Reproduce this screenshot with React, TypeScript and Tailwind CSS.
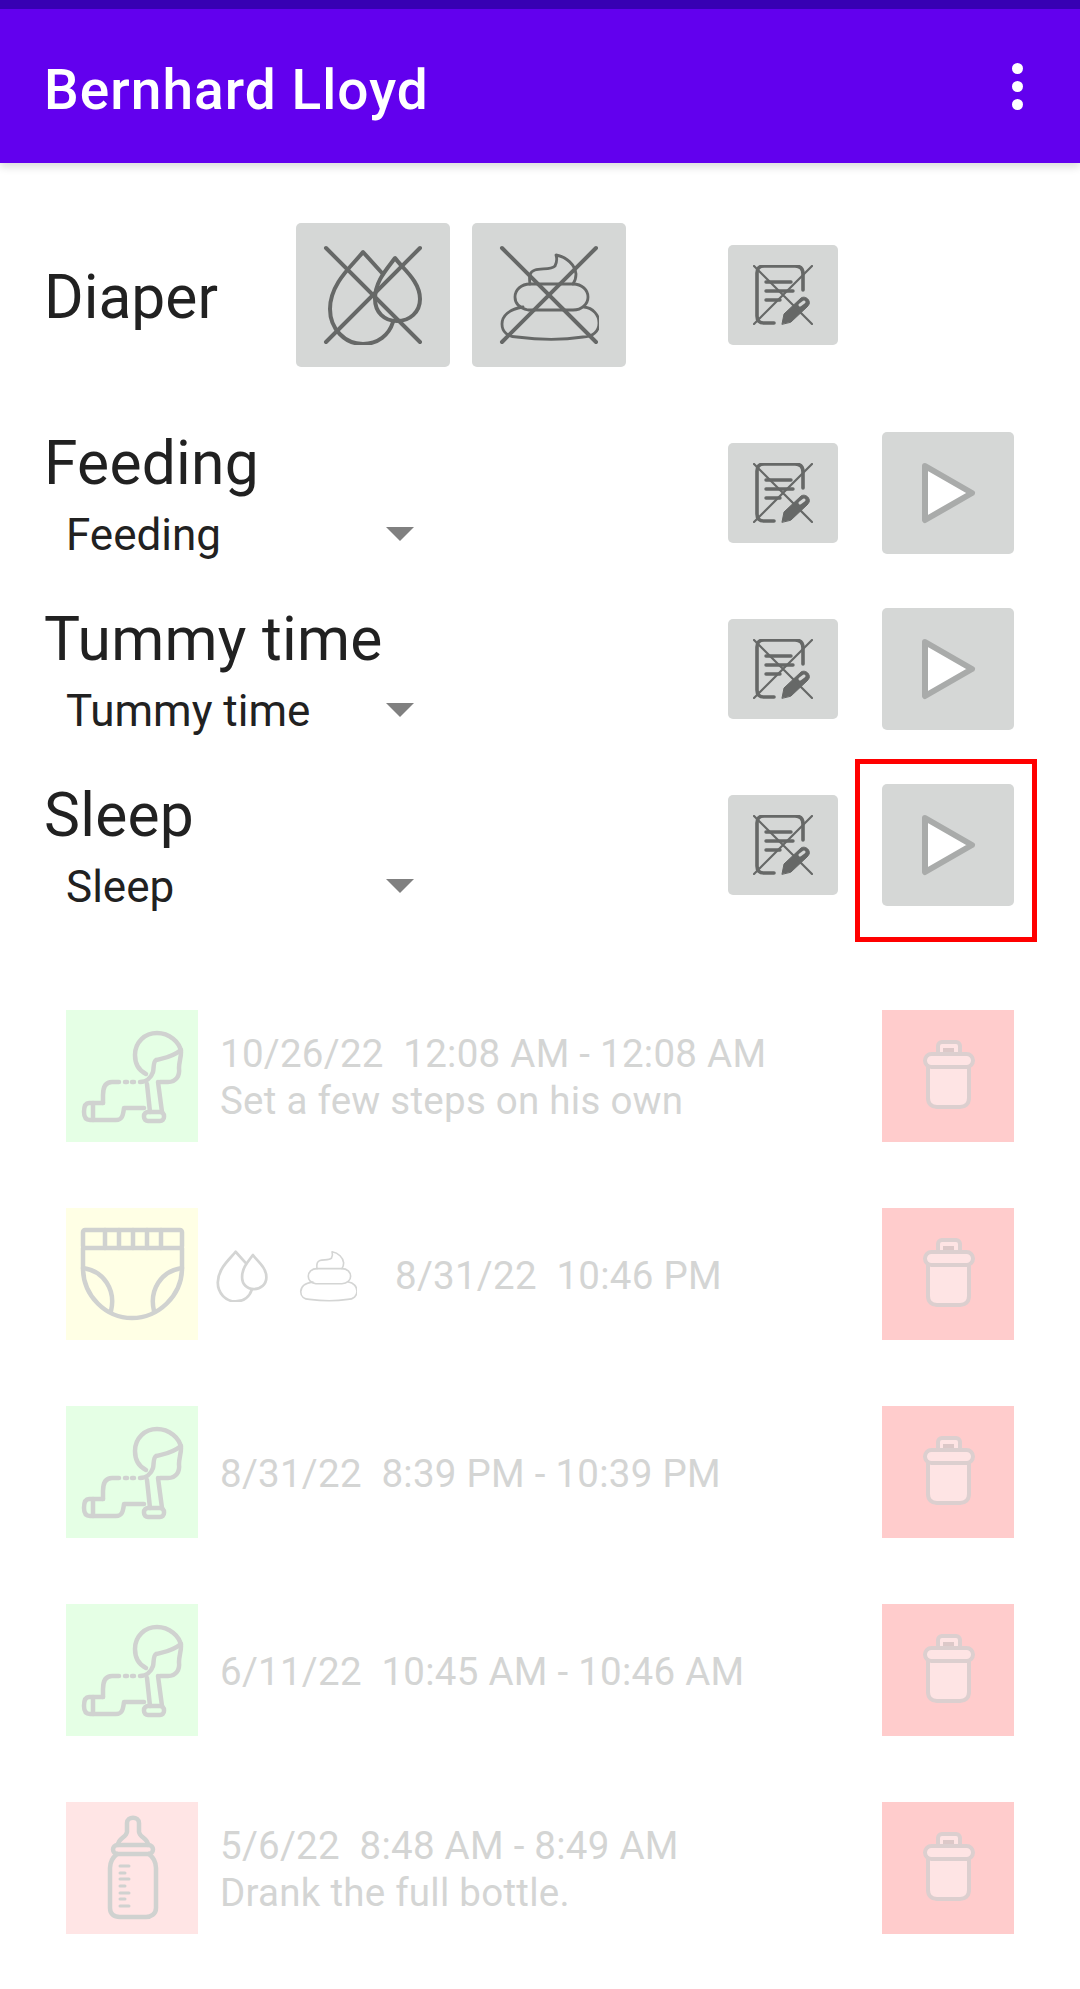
const strokeDark = '#666867';

function Drops({ cross = false, className = '', color = strokeDark, sw = 4 }: { cross?: boolean; className?: string; color?: string; sw?: number }) {
  return (
    <svg viewBox="0 0 100 100" className={className} fill="none" stroke={color} strokeWidth={sw} strokeLinecap="round" strokeLinejoin="round">
      <path d="M59 28 L40 7 C30 20 7 38 7 64 C7 84 22 99 40 99 C55 99 66 90 70 77" />
      <path d="M72 13 C64 24 52 36 52 54 C52 67 61 76 74 76 C87 76 97 67 97 54 C97 36 80 24 72 13 Z" />
      {cross && <path d="M3 3 L97 97 M97 3 L3 97" />}
    </svg>
  );
}

function Poop({ cross = false, className = '', color = strokeDark, sw = 2.8 }: { cross?: boolean; className?: string; color?: string; sw?: number }) {
  return (
    <svg viewBox="0 0 100 100" className={className} fill="none" stroke={color} strokeWidth={sw} strokeLinecap="round" strokeLinejoin="round">
      <path d="M24 62 C10 64 3 71 3 79 C3 87 9 92 18 92 C40 95 65 95 84 92 C94 92 100 86 100 78 C100 70 94 63 85 62" />
      <path d="M29 65 C20 63 16 58 16 52 C16 45 22 39 31 39 H74 C83 39 89 45 89 52 C89 59 83 65 74 65 Z" />
      <path d="M31 39 C30 32 30 27 36 25 C42 23 52 25 56 21 C58 17 58 13 57 10 C68 12 76 20 77 29 C77 33 76 36 74 39" />
      {cross && <path d="M3 3 L97 97 M97 3 L3 97" strokeWidth={4} />}
    </svg>
  );
}

function NotesIcon() {
  return (
    <svg viewBox="0 0 60 60" className="w-[60px] h-[60px]" fill="none" stroke={strokeDark} strokeLinecap="round" strokeLinejoin="round">
      <path d="M21 58 H11 Q4 58 4 51 V8 Q4 1 11 1 H42 Q50 1 50 9 V25" strokeWidth={3.6} />
      <path d="M13 17 H38 M13 26 H40 M13 35 H27" strokeWidth={3.4} />
      <path d="M29 59 L31 49 L48 33 C51 31 55 33 56 36 C57 38 56 40 54 42 L38 57 Z" fill={strokeDark} strokeWidth={1} />
      <path d="M47 40 L51 37" stroke="#d5d7d6" strokeWidth={3} />
      <path d="M1 1 L59 59 M59 1 L1 59" strokeWidth={2.2} />
    </svg>
  );
}

function PlayIcon() {
  return (
    <svg viewBox="0 0 56 62" className="w-[56px] h-[62px]">
      <path d="M5 4 L52 31 L5 58 Z" fill="#ffffff" stroke="#a9abaa" strokeWidth={6} strokeLinejoin="round" />
    </svg>
  );
}

function NotesButton() {
  return (
    <button className="w-[110px] h-[100px] rounded-[5px] bg-[#d5d7d6] flex items-center justify-center shrink-0">
      <NotesIcon />
    </button>
  );
}

function PlayButton() {
  return (
    <button className="w-[132px] h-[122px] rounded-[5px] bg-[#d5d7d6] flex items-center justify-center shrink-0">
      <PlayIcon />
    </button>
  );
}

function ActivityRow({ label, boxed = false }: { label: string; boxed?: boolean }) {
  return (
    <div className="h-[176px] flex items-center pl-[44px]">
      <div className="w-[684px] self-start pt-[23px]">
        <div className="text-[60.5px] leading-[71px] tracking-[0.25px] text-[#212121]">{label}</div>
        <div className="flex items-center justify-between w-[370px] h-[60px] pl-[22px] mt-[6px]">
          <span className="text-[44px] leading-[52px] text-[#212121]">{label}</span>
          <svg viewBox="0 0 28 14" className="w-[28px] h-[14px] -mt-[2px]">
            <polygon points="0,0 28,0 14,14" fill="#808080" />
          </svg>
        </div>
      </div>
      <NotesButton />
      <div className="relative ml-[44px]">
        <PlayButton />
        {boxed && (
          <div className="absolute -left-[27px] -top-[25px] w-[182px] h-[183px] border-[5px] border-[#ff0000]" />
        )}
      </div>
    </div>
  );
}

function CrawlIcon() {
  return (
    <svg viewBox="0 0 132 132" className="w-[132px] h-[132px]" fill="none" stroke="#d0d2d0" strokeWidth={4.5} strokeLinecap="round" strokeLinejoin="round">
      <path d="M80 64 C72 60 69 52 69 45 C69 32 79 23 91 23 C103 23 114 32 115 42 C115 48 113 52 113 58 C114 66 110 72 102 72 H94" />
      <path d="M115 40 C105 48 97 48 90 50 C87 52 88 58 87 62 C85 68 80 72 74 72" />
      <path d="M68 72 H66 M61 72 H59 M53 72 H46 C39 72 37 78 37 85 V93" />
      <path d="M81 74 L84 102 M92 72 L96 102" />
      <rect x="78" y="102" width="20" height="9" rx="4" />
      <path d="M37 93 H23 C19 93 18 97 18 102 C18 107 20 110 24 110 H50 C56 110 57 106 58 98 H78" />
      <path d="M27 93 V110" />
    </svg>
  );
}

function DiaperIcon() {
  return (
    <svg viewBox="0 0 132 132" className="w-[132px] h-[132px]" fill="none" stroke="#d0d2d0" strokeWidth={4.5} strokeLinecap="round" strokeLinejoin="round">
      <rect x="17" y="22" width="99" height="18" rx="2" />
      <path d="M39 22 V40 M53 22 V40 M67 22 V40 M81 22 V40 M95 22 V40" />
      <path d="M17 40 V60 C17 88 40 110 66 110 C92 110 116 88 116 60 V40" />
      <path d="M17 60 C38 63 50 82 45 103 M116 60 C95 63 83 82 88 103" />
    </svg>
  );
}

function BottleIcon() {
  return (
    <svg viewBox="0 0 132 132" className="w-[132px] h-[132px]" fill="none" stroke="#d0d2d0" strokeWidth={4.5} strokeLinecap="round" strokeLinejoin="round">
      <path d="M52 43 C52 36 60 36 61 30 V21 C61 14 73 14 73 21 V30 C74 36 82 36 82 43" />
      <rect x="47" y="43" width="40" height="9" rx="4.5" />
      <path d="M51 52 C46 56 44 60 44 66 V106 C44 112 48 115 54 115 H80 C85 115 90 112 90 106 V66 C90 60 88 56 83 52" />
      <path d="M54 64 H63 M54 71 H59 M54 77 H63 M54 84 H59 M54 91 H63 M54 97 H59 M54 104 H63" strokeWidth={3} />
    </svg>
  );
}

function TrashIcon() {
  return (
    <svg viewBox="0 0 132 132" className="w-[132px] h-[132px]" stroke="#dccfcf" strokeWidth={4} strokeLinejoin="round">
      <path d="M46 54 V88 C46 94 50 97 55 97 H78 C83 97 87 94 87 88 V54 Z" fill="#fee4e4" />
      <rect x="56" y="32" width="22" height="16" rx="4" fill="#fee4e4" />
      <rect x="61" y="38" width="11" height="5" fill="#dcc8c8" stroke="none" />
      <rect x="43" y="44" width="48" height="13" rx="6.5" fill="#fee4e4" />
    </svg>
  );
}

const textCls = 'text-[38.5px] leading-[47px] tracking-[0.26px] text-[#d4d5d4] whitespace-pre';

function LogRow({ icon, tint, lines, children }: { icon: React.ReactNode; tint: string; lines?: string[]; children?: React.ReactNode }) {
  return (
    <div className="h-[198px] flex items-start">
      <div className={`w-[132px] h-[132px] shrink-0 ${tint}`}>{icon}</div>
      <div className="flex-1 h-[132px] flex flex-col justify-center pl-[22px] pt-[2px]">
        {lines?.map((line) => (
          <div key={line} className={textCls}>{line}</div>
        ))}
        {children}
      </div>
      <div className="w-[132px] h-[132px] shrink-0 bg-[#ffcccc]">
        <TrashIcon />
      </div>
    </div>
  );
}

export default function App() {
  return (
    <div className="w-[1080px] h-[1989px] flex flex-col bg-white font-[Roboto,sans-serif] overflow-hidden">
      <div className="relative z-10 shadow-[0_4px_8px_rgba(0,0,0,0.14)]">
        <div className="h-[9px] bg-[#3700b3]" />
        <div className="h-[154px] bg-[#6200ee] flex items-center justify-between pl-[44px] pr-[57px]">
          <div className="text-[55px] leading-[64px] font-medium tracking-[1.05px] text-white mt-[7px]">Bernhard Lloyd</div>
          <div className="flex flex-col gap-[7px]">
            <div className="w-[11px] h-[11px] rounded-full bg-white" />
            <div className="w-[11px] h-[11px] rounded-full bg-white" />
            <div className="w-[11px] h-[11px] rounded-full bg-white" />
          </div>
        </div>
      </div>

      <div className="mt-[60px] h-[144px] flex items-center pl-[44px]">
        <div className="w-[252px] text-[60.5px] leading-[71px] text-[#212121] mt-[5px]">Diaper</div>
        <button className="w-[154px] h-[144px] rounded-[5px] bg-[#d5d7d6] flex items-center justify-center">
          <Drops cross className="w-[100px] h-[100px]" />
        </button>
        <button className="ml-[22px] w-[154px] h-[144px] rounded-[5px] bg-[#d5d7d6] flex items-center justify-center">
          <Poop cross className="w-[100px] h-[100px]" />
        </button>
        <div className="ml-[102px]">
          <NotesButton />
        </div>
      </div>

      <div className="mt-[38px]">
        <ActivityRow label="Feeding" />
        <ActivityRow label="Tummy time" />
        <ActivityRow label="Sleep" boxed />
      </div>

      <div className="mt-[77px] px-[66px]">
        <LogRow icon={<CrawlIcon />} tint="bg-[#e5ffe5]" lines={['10/26/22  12:08 AM - 12:08 AM', 'Set a few steps on his own']} />
        <LogRow icon={<DiaperIcon />} tint="bg-[#ffffe5]">
          <div className="flex items-center">
            <Drops className="w-[54px] h-[54px] -ml-[6px]" color="#d4d5d4" sw={5} />
            <Poop className="w-[58px] h-[58px] ml-[31px]" color="#d4d5d4" sw={2.8} />
            <span className={`${textCls} ml-[38px]`}>8/31/22  10:46 PM</span>
          </div>
        </LogRow>
        <LogRow icon={<CrawlIcon />} tint="bg-[#e5ffe5]" lines={['8/31/22  8:39 PM - 10:39 PM']} />
        <LogRow icon={<CrawlIcon />} tint="bg-[#e5ffe5]" lines={['6/11/22  10:45 AM - 10:46 AM']} />
        <LogRow icon={<BottleIcon />} tint="bg-[#ffe5e5]" lines={['5/6/22  8:48 AM - 8:49 AM', 'Drank the full bottle.']} />
      </div>

      <div className="mt-auto h-[3px] bg-[#c4c4c4]" />
    </div>
  );
}
